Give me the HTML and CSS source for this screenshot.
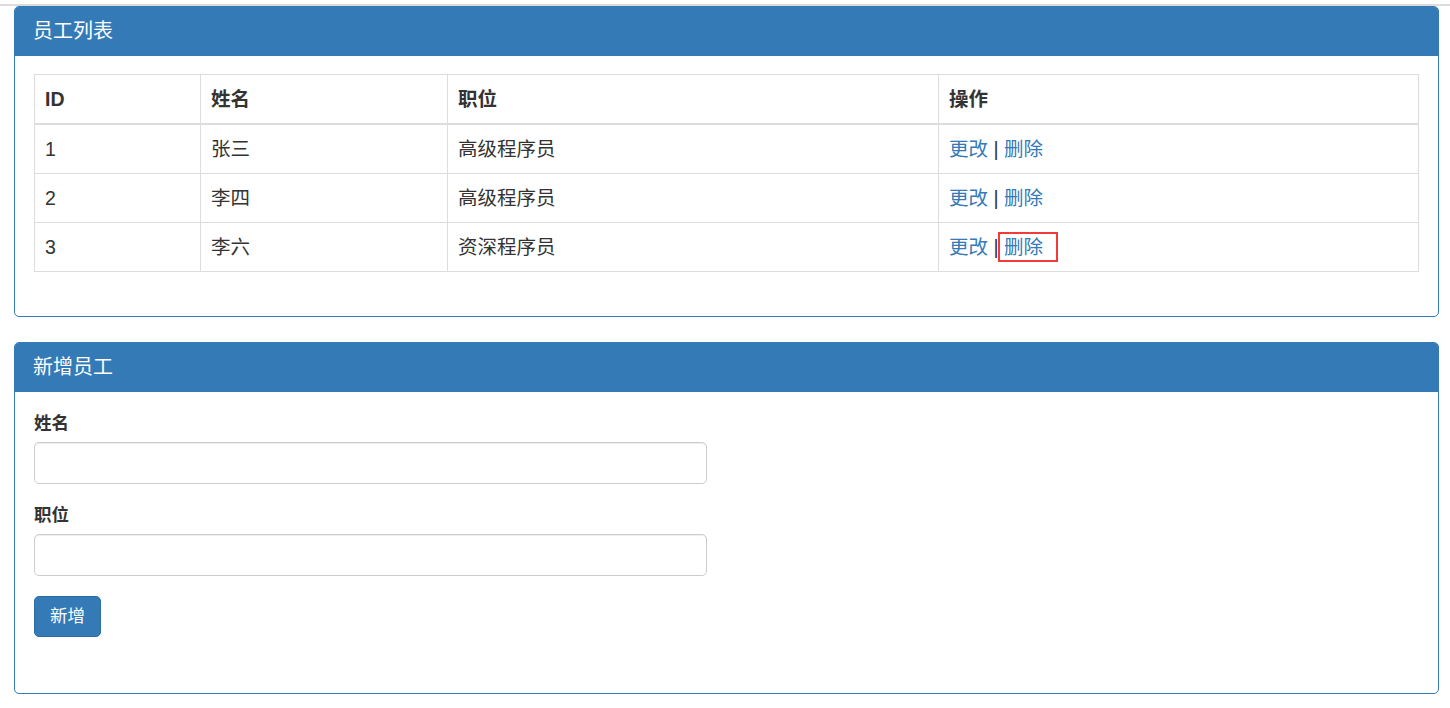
FILE: index.html
```html
<!DOCTYPE html>
<html lang="zh-CN">
<head>
    <meta charset="UTF-8" />
    <meta name="viewport" content="width=device-width, initial-scale=1.0" />
    <title>员工管理</title>
    <link rel="stylesheet" href="styles.css">
</head>
<body>
    <div class="topline"></div>
    <div class="wrap">
        <!-- 员工列表 -->
        <div class="panel">
            <div class="panel-heading">员工列表</div>
            <div class="panel-body">
                <table class="table">
                    <colgroup>
                        <col style="width:166px">
                        <col style="width:247px">
                        <col style="width:491px">
                        <col>
                    </colgroup>
                    <thead>
                        <tr><th>ID</th><th>姓名</th><th>职位</th><th>操作</th></tr>
                    </thead>
                    <tbody>
                        <tr>
                            <td>1</td><td>张三</td><td>高级程序员</td>
                            <td><a href="#">更改</a> | <a href="#">删除</a></td>
                        </tr>
                        <tr>
                            <td>2</td><td>李四</td><td>高级程序员</td>
                            <td><a href="#">更改</a> | <a href="#">删除</a></td>
                        </tr>
                        <tr>
                            <td>3</td><td>李六</td><td>资深程序员</td>
                            <td><a href="#">更改</a> | <a href="#" class="marked">删除</a></td>
                        </tr>
                    </tbody>
                </table>
            </div>
        </div>

        <!-- 新增员工 -->
        <div class="panel">
            <div class="panel-heading">新增员工</div>
            <div class="panel-body form-body">
                <div class="form-group">
                    <label for="name">姓名</label>
                    <input type="text" id="name" class="form-control">
                </div>
                <div class="form-group">
                    <label for="job">职位</label>
                    <input type="text" id="job" class="form-control">
                </div>
                <button class="btn">新增</button>
            </div>
        </div>
    </div>
</body>
</html>
```

FILE: styles.css
```css
body {
    margin: 0;
    font-family: "Liberation Sans", "Noto Sans CJK SC", sans-serif;
    font-size: 17.5px;
    line-height: 25px;
    color: #333;
    background: #fff;
}
.topline {
    height: 2px;
    margin-top: 4px;
    background: #dcdcdc;
}
.wrap {
    padding: 0 11px 0 14px;
}

/* panels */
.panel {
    border: 1px solid #337ab7;
    border-radius: 5px;
    margin-bottom: 25px;
    background: #fff;
}
.panel-heading {
    background: #337ab7;
    color: #fff;
    font-size: 20px;
    line-height: 22px;
    padding: 13px 19px 13px 18px;
    border-bottom: 1px solid #337ab7;
    border-radius: 4px 4px 0 0;
}
.panel-body {
    padding: 18px 19px 19px 19px;
}

/* table */
.table {
    width: 100%;
    border-collapse: collapse;
    border: 1px solid #ddd;
    margin-bottom: 25px;
    font-size: 19.5px;
}
.table th, .table td {
    border: 1px solid #ddd;
    padding: 10px 10px;
    line-height: 28px;
    text-align: left;
    vertical-align: top;
}
.table th {
    font-weight: bold;
    border-bottom-width: 2px;
}
.table a {
    color: #337ab7;
    text-decoration: none;
}
.marked {
    position: relative;
}
.marked::after {
    content: "";
    position: absolute;
    left: -6px;
    right: -15px;
    top: -4px;
    bottom: -4px;
    border: 2px solid #f23a3a;
}

/* form */
.form-body {
    padding-top: 19px;
    padding-bottom: 56px;
}
.form-group {
    margin-bottom: 19px;
}
.form-group label {
    display: block;
    font-weight: bold;
    margin-bottom: 6px;
}
.form-control {
    display: block;
    box-sizing: border-box;
    width: 673px;
    height: 42px;
    padding: 7px 15px;
    font-size: 17.5px;
    border: 1px solid #ccc;
    border-radius: 5px;
    box-shadow: inset 0 1px 1px rgba(0,0,0,0.075);
}
.btn {
    display: block;
    margin-top: 20px;
    background: #337ab7;
    border: 1px solid #2e6da4;
    border-radius: 5px;
    color: #fff;
    font-family: inherit;
    font-size: 17.5px;
    line-height: 25px;
    padding: 7px 15px;
    width: 67px;
    height: 41px;
    cursor: pointer;
}
```
